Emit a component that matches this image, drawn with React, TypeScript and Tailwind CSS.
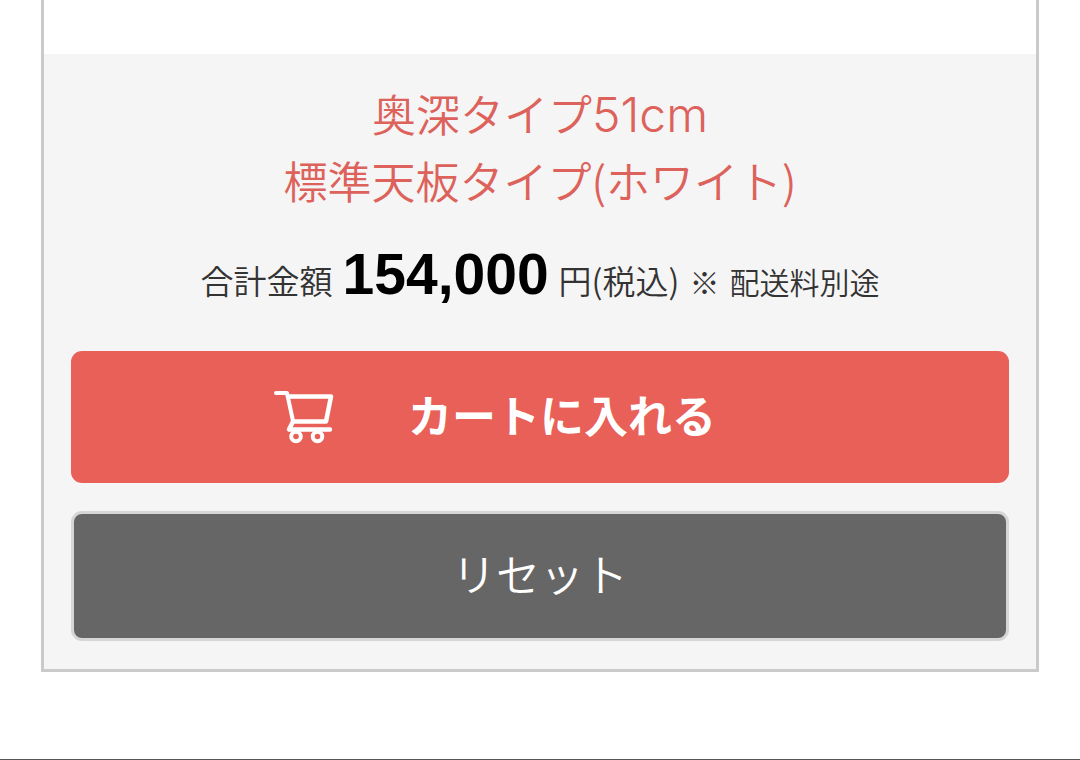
const options = [
  { name: "奥深タイプ", size: "51cm" },
  { name: "標準天板タイプ(ホワイト)", size: "" },
];

const CartIcon = () => (
  <svg
    viewBox="0 0 60 54"
    className="h-[54px] w-[60px] shrink-0"
    fill="none"
    stroke="currentColor"
    strokeWidth="4"
    strokeLinecap="round"
    strokeLinejoin="round"
    aria-hidden="true"
  >
    <path d="M2 3h11l6 28" />
    <path d="M14 6.500h43l-5 25H19l-4 8h41" strokeWidth="4.500" />
    <circle cx="22" cy="46.500" r="4.800" />
    <circle cx="43.500" cy="46.500" r="4.800" />
  </svg>
);

const App = () => (
  <div className="min-h-screen flex flex-col bg-white font-['Noto_Sans_CJK_JP',sans-serif]">
    <main className="flex-1">
      <section className="mx-[41px] border-x-3 border-b-3 border-[#cacaca] pt-[54px]">
        <div className="bg-[#f5f5f5] px-[27px] pt-[26px] pb-7">
          <h2 className="text-center text-[44px] leading-[67px] font-[350] text-[#dc625b]">
            {options.map((option) => (
              <span key={option.name} className="block">
                {option.name}
                {option.size && (
                  <span className="font-['Inter',sans-serif] text-[48px] leading-none font-light">
                    {option.size}
                  </span>
                )}
              </span>
            ))}
          </h2>

          <p className="mt-6 flex items-baseline justify-center text-[33px] leading-[72px] font-[350] whitespace-nowrap text-[#333]">
            <span>合計金額</span>
            <strong className="mx-[10px] font-['Liberation_Sans',sans-serif] text-[57px] font-bold text-black">
              154,000
            </strong>
            <span>円(税込)</span>
            <span className="ml-[10px] text-[30px]">※</span>
            <span className="ml-[10px] text-[30px]">配送料別途</span>
          </p>

          <button
            type="button"
            className="mt-[34px] flex h-[132px] w-full items-center justify-center gap-[74px] rounded-[11px] bg-[#e86057] pr-[90px] text-[44px] font-bold text-white"
          >
            <CartIcon />
            <span className="pb-[6px]">カートに入れる</span>
          </button>

          <button
            type="button"
            className="mt-7 block h-[130px] w-full rounded-[11px] border-3 border-[#d6d6d6] bg-[#666] pb-[6px] text-center text-[44px] font-[350] text-white"
          >
            リセット
          </button>
        </div>
      </section>
    </main>
    <div className="h-px bg-[#555]" />
  </div>
);

export default App;
